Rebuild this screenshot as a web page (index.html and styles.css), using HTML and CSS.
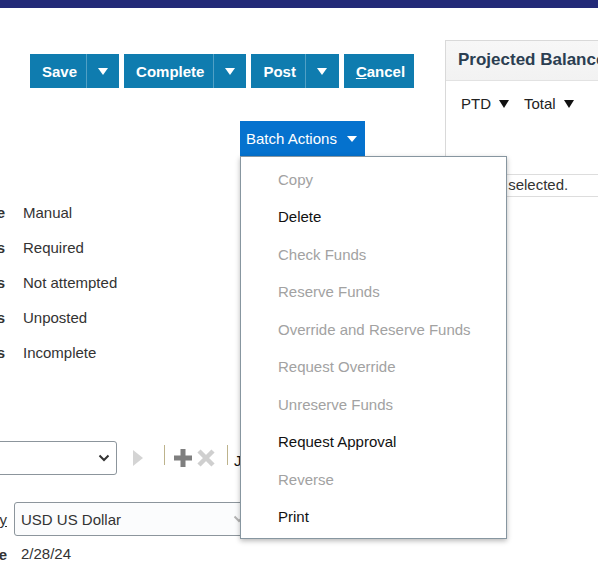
FILE: index.html
```html
<!DOCTYPE html>
<html lang="en">
<head>
<meta charset="utf-8">
<title>Journal</title>
<link rel="stylesheet" href="styles.css">
</head>
<body>
<div class="topbar"></div>
<div class="main">
  <div class="left">
    <div class="toolbar">
      <div class="split">
        <button class="btn">Save</button><button class="btn caret"><span class="tri"></span></button>
      </div>
      <div class="split">
        <button class="btn">Complete</button><button class="btn caret"><span class="tri"></span></button>
      </div>
      <div class="split">
        <button class="btn">Post</button><button class="btn caret wide"><span class="tri"></span></button>
      </div>
      <button class="btn"><u>C</u>ancel</button>
    </div>

    <div class="batch">
      <div class="batch-wrap">
        <button class="batch-btn">Batch Actions<span class="tri small"></span></button>
        <ul class="menu">
          <li class="off">Copy</li>
          <li>Delete</li>
          <li class="off">Check Funds</li>
          <li class="off">Reserve Funds</li>
          <li class="off">Override and Reserve Funds</li>
          <li class="off">Request Override</li>
          <li class="off">Unreserve Funds</li>
          <li>Request Approval</li>
          <li class="off">Reverse</li>
          <li>Print</li>
        </ul>
      </div>
    </div>

    <div class="form">
      <div class="lbl">Source</div><div class="val">Manual</div>
      <div class="lbl">Approval Status</div><div class="val">Required</div>
      <div class="lbl">Funds Status</div><div class="val">Not attempted</div>
      <div class="lbl">Posting Status</div><div class="val">Unposted</div>
      <div class="lbl">Completion Status</div><div class="val">Incomplete</div>
    </div>

    <div class="lines-bar">
      <div class="select">
        <svg class="chev" width="12" height="8" viewBox="0 0 12 8"><path d="M1.5 1.5 L6 6 L10.5 1.5" fill="none" stroke="#333" stroke-width="2"/></svg>
      </div>
      <svg class="play" width="10" height="16" viewBox="0 0 10 16"><polygon points="0,0 10,8 0,16" fill="#d4d4d4"/></svg>
      <span class="sep first"></span>
      <svg class="plus" width="18" height="18" viewBox="0 0 18 18"><path d="M9 0 V18 M0 9 H18" stroke="#7f7f7f" stroke-width="5"/></svg>
      <svg class="cross" width="18" height="18" viewBox="0 0 18 18"><path d="M2 2 L16 16 M16 2 L2 16" stroke="#cfcfcf" stroke-width="4.5"/></svg>
      <span class="sep second"></span>
      <span class="lines-title">Journal Lines</span>
    </div>

    <div class="form2">
      <div class="lbl2"><span class="u">Currency</span></div>
      <div class="input">
        <span>USD US Dollar</span>
        <svg class="chev2" width="12" height="8" viewBox="0 0 12 8"><path d="M1.5 1.5 L6 6 L10.5 1.5" fill="none" stroke="#b5b5b5" stroke-width="2"/></svg>
      </div>
      <div class="lbl2 bold">Conversion Date</div>
      <div class="val2">2/28/24</div>
    </div>
  </div>

  <div class="panel">
    <div class="panel-head">Projected Balance</div>
    <div class="controls">
      <span>PTD</span><span class="tri dark"></span>
      <span>Total</span><span class="tri dark"></span>
    </div>
    <div class="row">No rows selected.</div>
  </div>
</div>
</body>
</html>
```

FILE: styles.css
```css
* { box-sizing: border-box; }
html, body { margin: 0; padding: 0; }
body {
  width: 598px;
  height: 588px;
  overflow: hidden;
  background: #fff;
  font-family: "Liberation Sans", Arial, sans-serif;
  font-size: 15px;
  color: #333;
}
.topbar { height: 8px; background: #232a78; }
.main { display: flex; width: 700px; align-items: flex-start; }
.left { width: 445px; flex: none; }

/* toolbar */
.toolbar { display: flex; gap: 5px; margin-top: 46px; padding-left: 30px; }
.split { display: flex; }
.btn {
  height: 34px;
  border: 0;
  margin: 0;
  padding: 0 9px 0 12px;
  background: #0f7caf;
  color: #fff;
  font-family: inherit;
  font-size: 15px;
  font-weight: bold;
  display: flex;
  align-items: center;
}
.btn.caret {
  width: 33px;
  padding: 0;
  justify-content: center;
  border-left: 1px solid rgba(255,255,255,0.28);
}
.btn.caret.wide { width: 34px; }
.tri {
  display: inline-block;
  width: 0; height: 0;
  border-left: 5.5px solid transparent;
  border-right: 5.5px solid transparent;
  border-top: 7px solid #fff;
}
.tri.small { border-left-width: 5px; border-right-width: 5px; border-top-width: 6px; margin-left: 10px; }
.tri.dark { border-top-color: #111; border-top-width: 8px; }

/* batch actions */
.batch { margin-top: 33px; padding-left: 240px; }
.batch-wrap { position: relative; display: inline-block; }
.batch-btn {
  height: 35px;
  border: 0;
  margin: 0;
  padding: 0 8px 0 6px;
  background: #0572ce;
  color: #fff;
  font-family: inherit;
  font-size: 15px;
  display: flex;
  align-items: center;
}
.menu {
  position: absolute;
  top: 35px;
  left: 0;
  width: 267px;
  margin: 0;
  padding: 3.5px 0 2.5px;
  list-style: none;
  background: #fff;
  border: 1px solid #8796a0;
  box-shadow: 0 2px 5px rgba(0,0,0,0.28);
  z-index: 5;
}
.menu li {
  height: 37.5px;
  line-height: 37.5px;
  padding-left: 37px;
  color: #111;
  white-space: nowrap;
}
.menu li.off { color: #a2a2a2; }

/* form */
.form {
  margin-top: 39px;
  margin-left: -200px;
  display: grid;
  grid-template-columns: 205px auto;
  grid-auto-rows: 35px;
  column-gap: 18px;
  align-items: center;
}
.lbl { text-align: right; font-weight: bold; white-space: nowrap; color: #333; }
.val { color: #333; white-space: nowrap; }

/* lines toolbar */
.lines-bar { margin-top: 71px; display: flex; align-items: center; height: 34px; }
.select {
  margin-left: -10px;
  width: 127px;
  height: 34px;
  border: 1px solid #8c959c;
  border-radius: 3px;
  background: #fff;
  display: flex;
  align-items: center;
  justify-content: flex-end;
  padding-right: 6px;
}
.play { margin-left: 16px; }
.sep { display: inline-block; width: 1px; height: 20px; background: #bdb38c; margin-top: -7px; }
.sep.first { margin-left: 21px; }
.plus { margin-left: 9px; }
.cross { margin-left: 5px; }
.sep.second { margin-left: 12px; }
.lines-title { margin-left: 6px; color: #111; white-space: nowrap; margin-top: 5px; }

/* form 2 */
.form2 {
  margin-top: 27px;
  margin-left: -200px;
  display: grid;
  grid-template-columns: 207px auto;
  column-gap: 7px;
  align-items: center;
}
.lbl2 { text-align: right; white-space: nowrap; color: #333; }
.lbl2.bold { font-weight: bold; }
.u { text-decoration: underline; }
.input {
  width: 244px;
  height: 34px;
  border: 1px solid #8c959c;
  border-radius: 3px;
  background: #fbfcfd;
  display: flex;
  align-items: center;
  justify-content: space-between;
  padding: 0 12px 0 6px;
  color: #333;
}
.val2 { height: 36px; line-height: 36px; padding-left: 7px; color: #333; }

/* panel */
.panel {
  width: 240px;
  flex: none;
  margin-top: 32px;
  border-top: 1px solid #d9d9d9;
  border-left: 1px solid #d9d9d9;
  height: 400px;
}
.panel-head {
  height: 40px;
  line-height: 38px;
  padding-left: 12px;
  background: linear-gradient(#f7f7f7, #f2f2f2);
  border-bottom: 1px solid #e2e2e2;
  font-weight: bold;
  font-size: 17px;
  color: #2b3e51;
  white-space: nowrap;
}
.controls {
  padding: 12px 0 0 15px;
  height: 33px;
  display: flex;
  align-items: center;
  color: #222;
  white-space: nowrap;
}
.controls .tri { margin: 0 15px 0 8px; }
.row {
  margin-top: 60px;
  border-top: 1px solid #ddd;
  border-bottom: 1px solid #ddd;
  height: 23px;
  line-height: 20px;
  padding-left: 3px;
  color: #333;
  white-space: nowrap;
}
```
